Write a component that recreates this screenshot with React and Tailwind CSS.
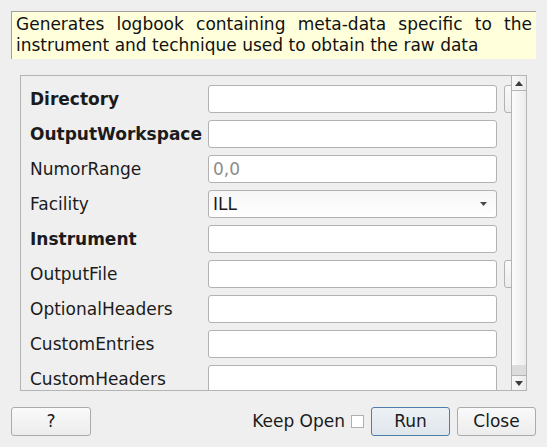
import React from "react";

const font = { fontFamily: '"DejaVu Sans", sans-serif' };

function Input({ placeholder }) {
  return (
    <div className="h-[28px] w-[289px] shrink-0 rounded-[3px] border border-[#b2b2b2] bg-white px-[4px] text-[17px] leading-[27px] text-[#8c8c8c]">
      {placeholder}
    </div>
  );
}

function Row({ label, bold, children, browse }) {
  return (
    <div className="flex h-[28px] items-center">
      <div
        className={
          "mt-[2px] w-[178px] shrink-0 text-[17px] text-[#1b1b1b] " +
          (bold ? "font-bold" : "")
        }
      >
        {label}
      </div>
      {children || <Input />}
      {browse && (
        <div className="ml-[7px] h-[28px] w-[30px] shrink-0 rounded-[3px] border border-[#b2b2b2] bg-gradient-to-b from-[#fafafa] to-[#ececec]" />
      )}
    </div>
  );
}

export default function App() {
  return (
    <div
      className="flex h-[447px] w-[547px] flex-col overflow-hidden bg-[#efefef] px-[11px] pt-[11px]"
      style={font}
    >
      <div className="h-[48px] w-[525px] border-l border-t border-[#a0a0a0] bg-[#ffffdc] px-[4px] pt-[2px] text-justify text-[17px] leading-[21px] text-[#111]">
        Generates logbook containing meta-data specific to the instrument and technique used to obtain the raw data
      </div>

      <div className="ml-[9px] mt-[16px] flex h-[316px] w-[507px] border border-[#b4b4b4]">
        <div className="flex flex-1 flex-col gap-[7px] overflow-hidden pl-[9px] pt-[9px]">
          <Row label="Directory" bold browse />
          <Row label="OutputWorkspace" bold />
          <Row label="NumorRange">
            <Input placeholder="0,0" />
          </Row>
          <Row label="Facility">
            <div className="flex h-[28px] w-[289px] shrink-0 items-center justify-between rounded-[3px] border border-[#b2b2b2] bg-gradient-to-b from-[#f6f6f6] to-[#ffffff] pl-[4px] pr-[9px] text-[17px] text-[#1b1b1b]">
              <span className="mt-[1px]">ILL</span>
              <svg width="7" height="4" viewBox="0 0 7 4">
                <path d="M0 0 L7 0 L3.5 4 Z" fill="#4a4a4a" />
              </svg>
            </div>
          </Row>
          <Row label="Instrument" bold />
          <Row label="OutputFile" browse />
          <Row label="OptionalHeaders" />
          <Row label="CustomEntries" />
          <Row label="CustomHeaders" />
        </div>
        <div className="flex w-[15px] shrink-0 flex-col border-l border-[#b4b4b4] bg-[#f4f4f4]">
          <div className="flex h-[15px] shrink-0 items-center justify-center border-b border-[#b4b4b4] bg-gradient-to-r from-[#f8f8f8] to-[#ececec]">
            <svg width="8" height="5" viewBox="0 0 8 5">
              <path d="M0 5 L8 5 L4 0 Z" fill="#3c3c3c" />
            </svg>
          </div>
          <div className="flex-1 bg-gradient-to-r from-[#fcfcfc] to-[#ececec]" />
          <div className="h-[10px] shrink-0 bg-[#dcdcdc]" />
          <div className="flex h-[15px] shrink-0 items-center justify-center border-t border-[#b4b4b4] bg-gradient-to-r from-[#f8f8f8] to-[#ececec]">
            <svg width="8" height="5" viewBox="0 0 8 5">
              <path d="M0 0 L8 0 L4 5 Z" fill="#3c3c3c" />
            </svg>
          </div>
        </div>
      </div>

      <div className="mt-[16px] flex h-[29px] items-center">
        <button className="flex h-[29px] w-[80px] items-center justify-center rounded-[3px] border border-[#ababab] bg-gradient-to-b from-[#fafafa] to-[#ececec] text-[17px] text-[#1b1b1b]">
          ?
        </button>
        <div className="flex-1" />
        <span className="text-[17px] text-[#1b1b1b]">Keep Open</span>
        <div className="ml-[6px] h-[13px] w-[13px] border border-[#b0b0b0] bg-white" />
        <button className="ml-[7px] flex h-[29px] w-[79px] items-center justify-center rounded-[3px] border border-[#4d7daa] bg-gradient-to-b from-[#edf1f4] to-[#dfe6ec] text-[17px] text-[#1b1b1b]">
          Run
        </button>
        <button className="ml-[7px] flex h-[29px] w-[79px] items-center justify-center rounded-[3px] border border-[#ababab] bg-gradient-to-b from-[#fafafa] to-[#ececec] text-[17px] text-[#1b1b1b]">
          Close
        </button>
      </div>
    </div>
  );
}
